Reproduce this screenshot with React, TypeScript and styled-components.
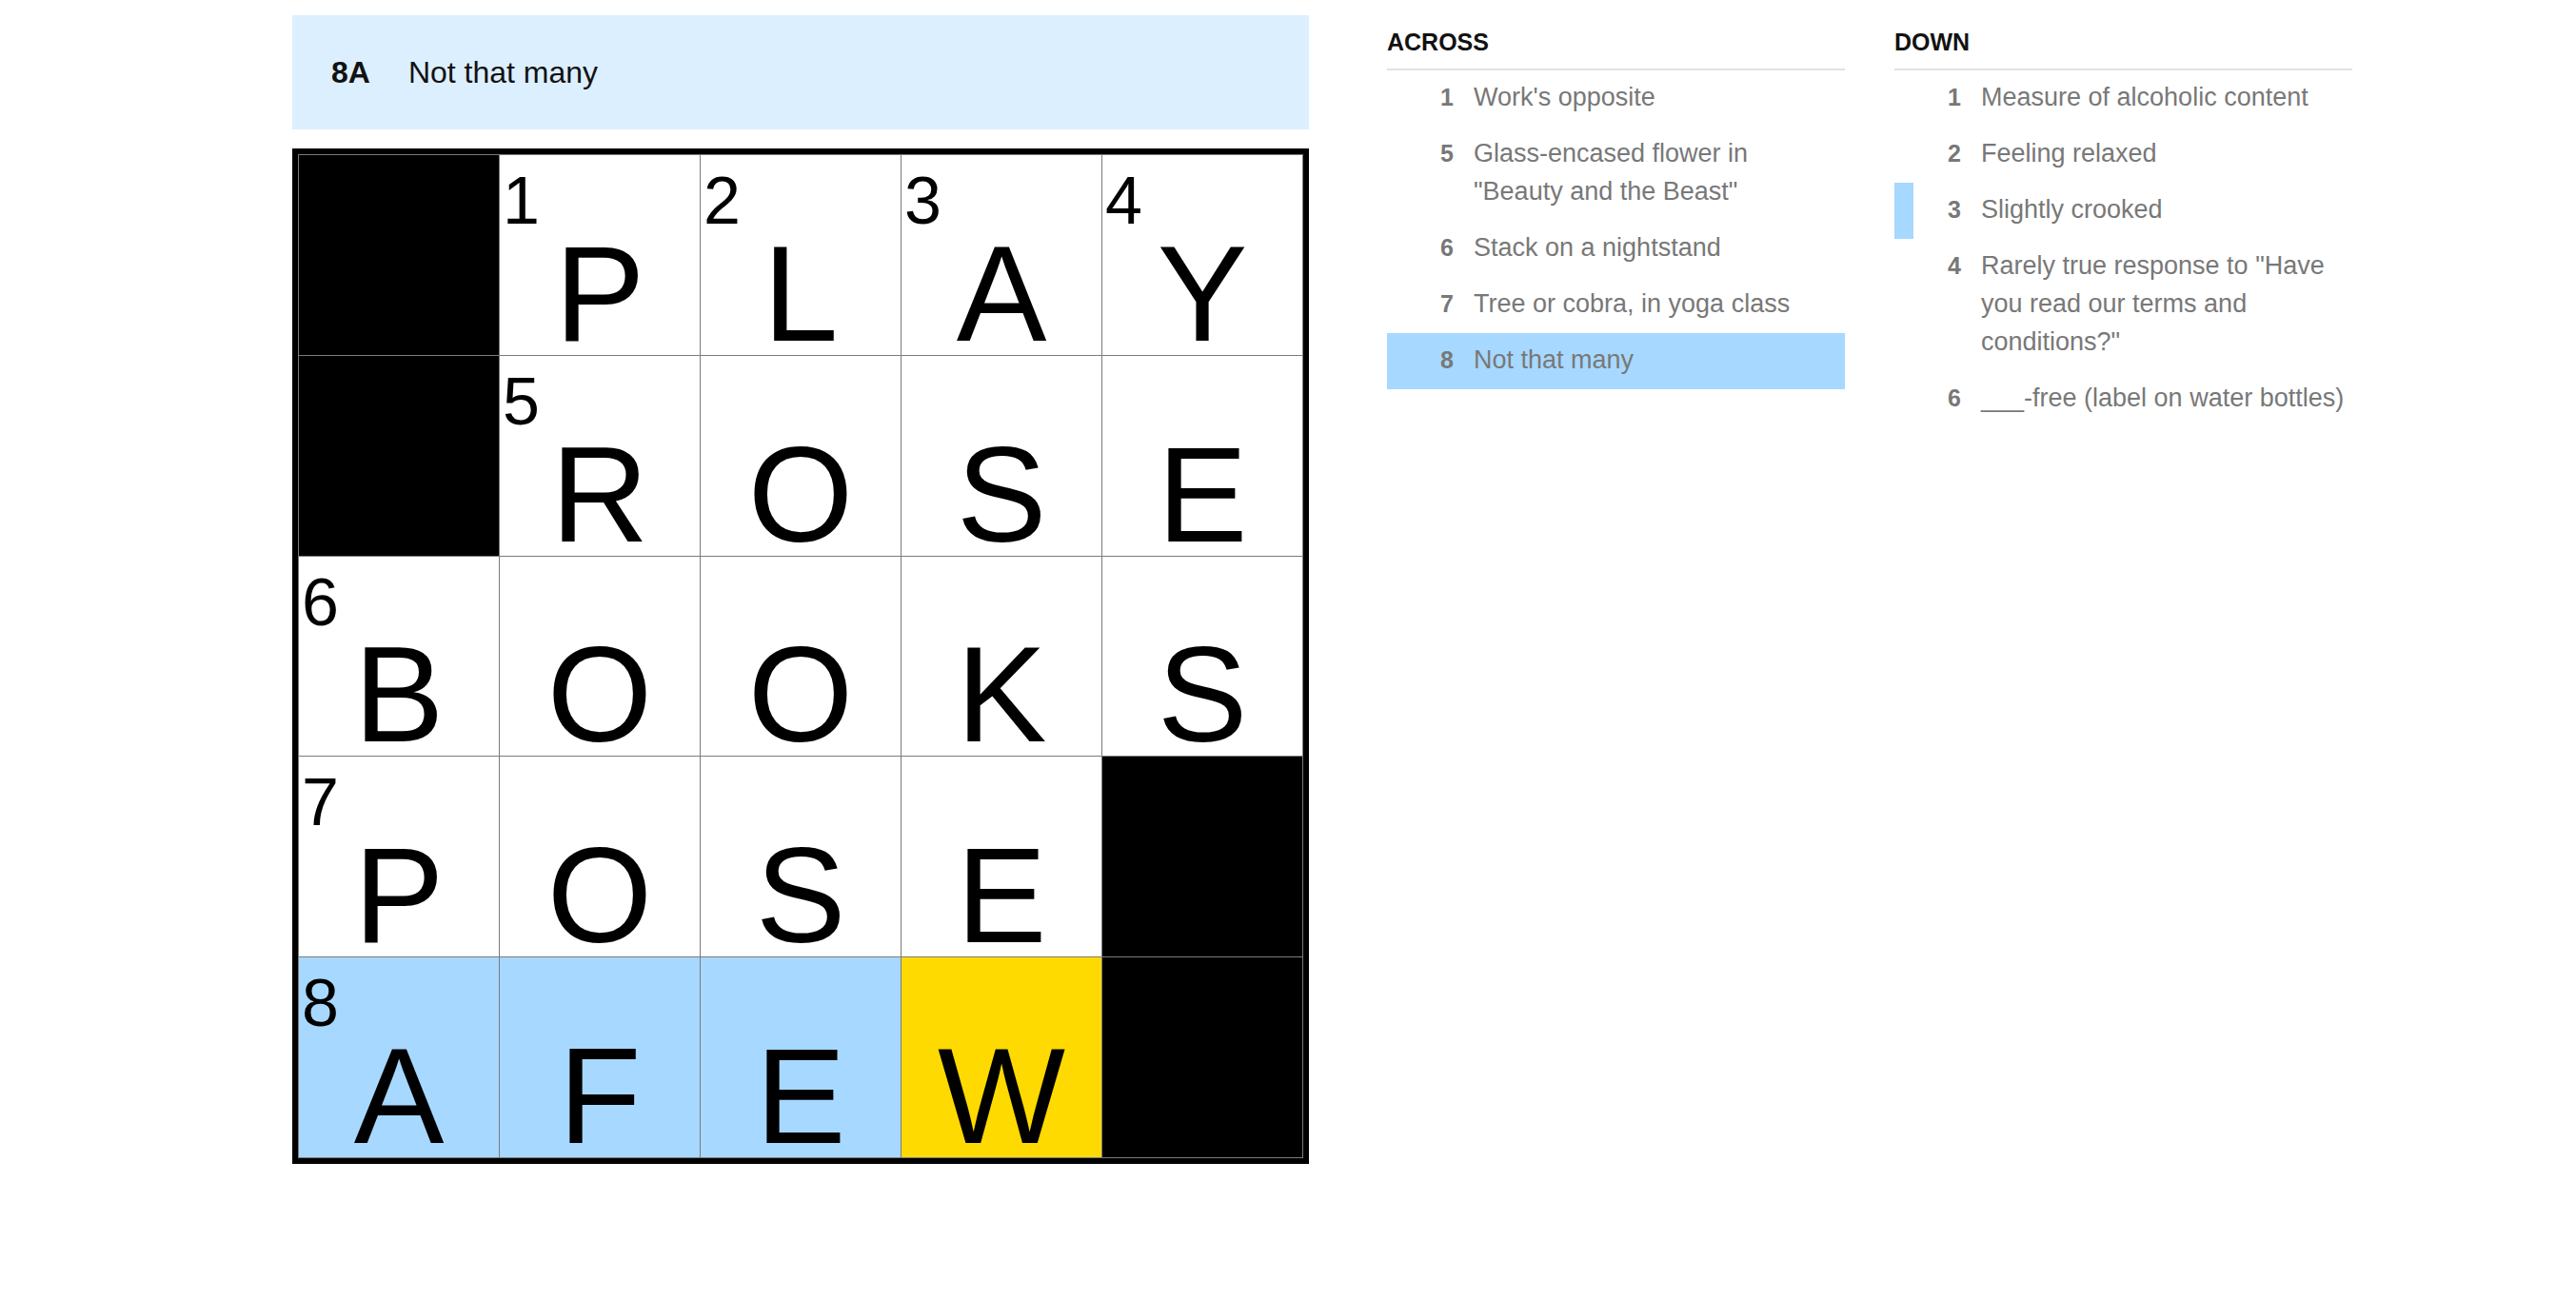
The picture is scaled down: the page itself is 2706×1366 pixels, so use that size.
import React from 'react'
import styled, { createGlobalStyle } from 'styled-components'

type CellState = 'plain' | 'word' | 'cursor'

interface CellData {
  letter: string
  num?: number
  state?: CellState
}

interface Clue {
  num: number
  text: string
  highlight?: 'active' | 'related'
}

const BOARD: (CellData | null)[][] = [
  [null, { letter: 'P', num: 1 }, { letter: 'L', num: 2 }, { letter: 'A', num: 3 }, { letter: 'Y', num: 4 }],
  [null, { letter: 'R', num: 5 }, { letter: 'O' }, { letter: 'S' }, { letter: 'E' }],
  [{ letter: 'B', num: 6 }, { letter: 'O' }, { letter: 'O' }, { letter: 'K' }, { letter: 'S' }],
  [{ letter: 'P', num: 7 }, { letter: 'O' }, { letter: 'S' }, { letter: 'E' }, null],
  [
    { letter: 'A', num: 8, state: 'word' },
    { letter: 'F', state: 'word' },
    { letter: 'E', state: 'word' },
    { letter: 'W', state: 'cursor' },
    null,
  ],
]

const ACROSS: Clue[] = [
  { num: 1, text: "Work's opposite" },
  { num: 5, text: 'Glass-encased flower in "Beauty and the Beast"' },
  { num: 6, text: 'Stack on a nightstand' },
  { num: 7, text: 'Tree or cobra, in yoga class' },
  { num: 8, text: 'Not that many', highlight: 'active' },
]

const DOWN: Clue[] = [
  { num: 1, text: 'Measure of alcoholic content' },
  { num: 2, text: 'Feeling relaxed' },
  { num: 3, text: 'Slightly crooked', highlight: 'related' },
  { num: 4, text: 'Rarely true response to "Have you read our terms and conditions?"' },
  { num: 6, text: '___-free (label on water bottles)' },
]

const cellColors: Record<CellState, string> = {
  plain: '#ffffff',
  word: '#a7d8ff',
  cursor: '#ffda00',
}

const GlobalStyle = createGlobalStyle`
  body {
    margin: 0;
    background: #ffffff;
    font-family: "Liberation Sans", Arial, Helvetica, sans-serif;
  }
`

const Layout = styled.div`
  display: flex;
  align-items: flex-start;
  padding: 16px 0 0 307px;
`

const PuzzleColumn = styled.div`
  width: 1068px;
  display: flex;
  flex-direction: column;
  gap: 20px;
`

const ClueBar = styled.div`
  height: 120px;
  background-color: #dcefff;
  display: flex;
  align-items: center;
  padding-left: 41px;
  color: #121212;
  font-size: 32px;
`

const ClueBarLabel = styled.span`
  font-weight: 700;
  margin-right: 40px;
`

const Board = styled.div`
  box-sizing: border-box;
  width: 1068px;
  height: 1067px;
  display: grid;
  grid-template-columns: repeat(5, 1fr);
  grid-template-rows: repeat(5, 1fr);
  gap: 1px;
  padding: 1px;
  background-color: #7b7b7b;
  border: 6px solid #000000;
`

const Cell = styled.div<{ $state?: CellState; $block?: boolean }>`
  position: relative;
  display: flex;
  justify-content: center;
  align-items: flex-end;
  color: #000000;
  background-color: ${({ $block, $state }) => ($block ? '#000000' : cellColors[$state || 'plain'])};
`

const CellNumber = styled.span`
  position: absolute;
  top: 13px;
  left: 3px;
  font-size: 70px;
  line-height: 1;
`

/* baseline sits 15px above the cell's bottom edge */
const CellLetter = styled.span`
  font-size: 142px;
  line-height: 128px;
`

const CluePanel = styled.div`
  display: flex;
  gap: 52px;
  margin: 13px 0 0 82px;
`

const ClueColumn = styled.section`
  width: 481px;
`

const ClueHeading = styled.h3`
  margin: 0;
  padding-bottom: 13px;
  border-bottom: 2px solid #e2e2e2;
  font-size: 25px;
  line-height: 30px;
  font-weight: 700;
  text-transform: uppercase;
  color: #121212;
`

const ClueList = styled.ol`
  list-style: none;
  margin: 0;
  padding: 0;
`

const ClueItem = styled.li<{ $highlight?: 'active' | 'related' }>`
  display: flex;
  align-items: baseline;
  padding: 8px 6px 11px 0;
  border-left: 20px solid ${({ $highlight }) => ($highlight === 'related' ? '#a7d8ff' : 'transparent')};
  background-color: ${({ $highlight }) => ($highlight === 'active' ? '#a7d8ff' : 'transparent')};
  font-size: 27px;
  line-height: 40px;
  color: #787878;
`

const ClueLabel = styled.span`
  flex-shrink: 0;
  width: 30px;
  margin: 0 21px 0 20px;
  text-align: right;
  font-size: 25px;
  font-weight: 700;
`

const ClueText = styled.span`
  flex: 1;
`

const ClueSection: React.FC<{ title: string; clues: Clue[] }> = ({ title, clues }) => (
  <ClueColumn>
    <ClueHeading>{title}</ClueHeading>
    <ClueList>
      {clues.map((clue) => (
        <ClueItem key={clue.num} $highlight={clue.highlight}>
          <ClueLabel>{clue.num}</ClueLabel>
          <ClueText>{clue.text}</ClueText>
        </ClueItem>
      ))}
    </ClueList>
  </ClueColumn>
)

const App: React.FC = () => (
  <>
    <GlobalStyle />
    <Layout>
      <PuzzleColumn>
        <ClueBar>
          <ClueBarLabel>8A</ClueBarLabel>
          <span>Not that many</span>
        </ClueBar>
        <Board>
          {BOARD.flatMap((row, r) =>
            row.map((cell, c) =>
              cell ? (
                <Cell key={`${r}-${c}`} $state={cell.state}>
                  {cell.num && <CellNumber>{cell.num}</CellNumber>}
                  <CellLetter>{cell.letter}</CellLetter>
                </Cell>
              ) : (
                <Cell key={`${r}-${c}`} $block />
              ),
            ),
          )}
        </Board>
      </PuzzleColumn>
      <CluePanel>
        <ClueSection title="Across" clues={ACROSS} />
        <ClueSection title="Down" clues={DOWN} />
      </CluePanel>
    </Layout>
  </>
)

export default App
